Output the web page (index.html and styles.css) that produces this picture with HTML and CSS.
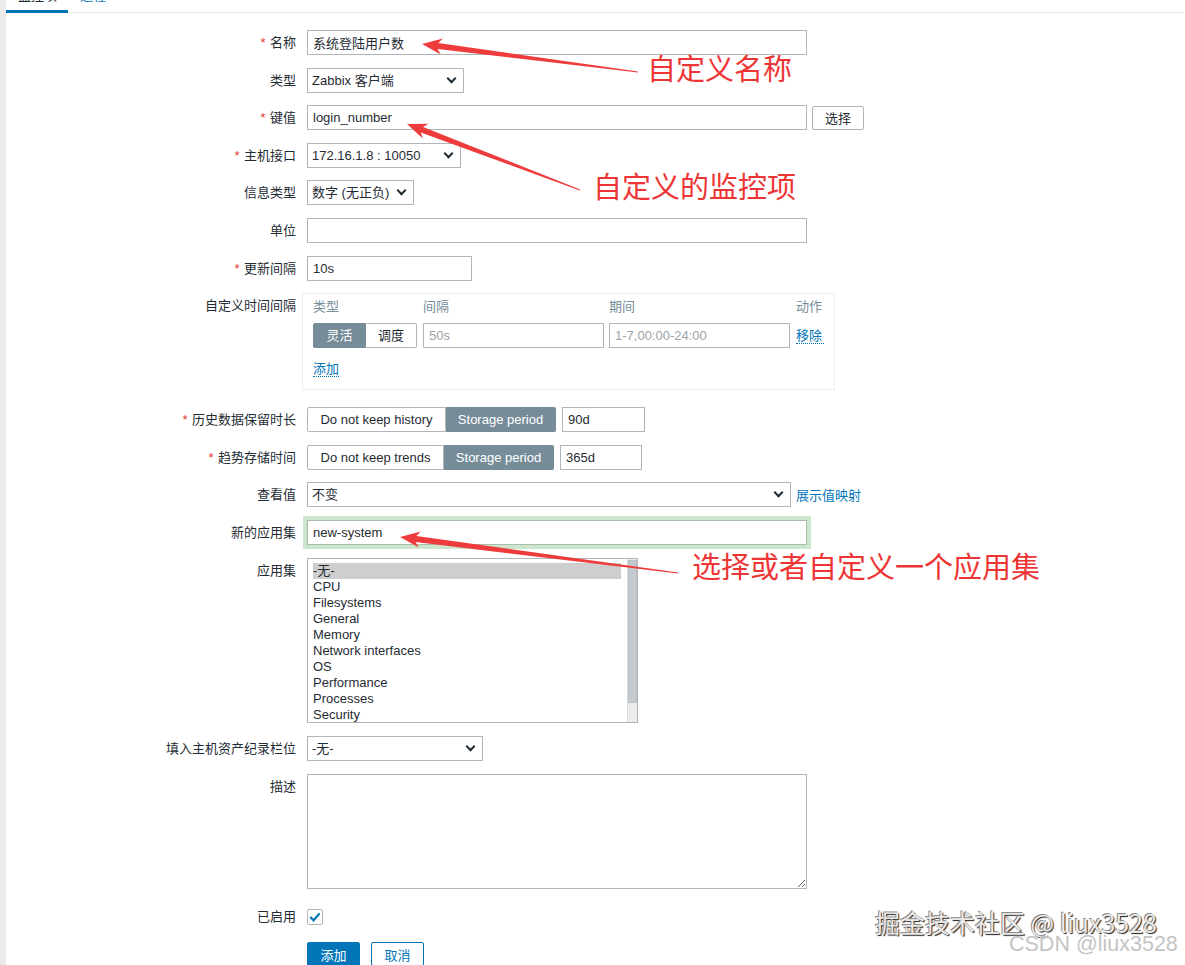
FILE: index.html
```html
<!DOCTYPE html>
<html lang="zh">
<head>
    <meta charset="UTF-8">
    <title>监控项</title>
    <link rel="stylesheet" href="styles.css">
</head>
<body>
<div class="page">

    <div class="tabs">
        <a class="tab active"><span>监控项</span></a>
        <a class="tab"><span>进程</span></a>
    </div>

    <form class="form">
        <div class="row">
            <label class="lbl req">名称</label>
            <div class="ctl"><input class="txt w500" value="系统登陆用户数"></div>
        </div>
        <div class="row">
            <label class="lbl">类型</label>
            <div class="ctl"><span class="sel"><select class="w157"><option>Zabbix 客户端</option></select></span></div>
        </div>
        <div class="row">
            <label class="lbl req">键值</label>
            <div class="ctl">
                <input class="txt w500" value="login_number">
                <button type="button" class="btn-grey">选择</button>
            </div>
        </div>
        <div class="row">
            <label class="lbl req">主机接口</label>
            <div class="ctl"><span class="sel"><select class="w154"><option>172.16.1.8 : 10050</option></select></span></div>
        </div>
        <div class="row">
            <label class="lbl">信息类型</label>
            <div class="ctl"><span class="sel"><select class="w107"><option>数字 (无正负)</option></select></span></div>
        </div>
        <div class="row">
            <label class="lbl">单位</label>
            <div class="ctl"><input class="txt w500" value=""></div>
        </div>
        <div class="row">
            <label class="lbl req">更新间隔</label>
            <div class="ctl"><input class="txt w165" value="10s"></div>
        </div>
        <div class="row row-iv">
            <label class="lbl">自定义时间间隔</label>
            <div class="intervals">
                <div class="iv-grid">
                    <div class="iv-h">类型</div>
                    <div class="iv-h">间隔</div>
                    <div class="iv-h">期间</div>
                    <div class="iv-h">动作</div>

                    <div class="seg">
                        <span class="seg-item on w53">灵活</span>
                        <span class="seg-item w51">调度</span>
                    </div>
                    <input class="txt w181" placeholder="50s">
                    <input class="txt w181" placeholder="1-7,00:00-24:00">
                    <a class="lnk">移除</a>
                </div>
                <a class="lnk">添加</a>
            </div>
        </div>
        <div class="row">
            <label class="lbl req">历史数据保留时长</label>
            <div class="ctl gap6">
                <div class="seg">
                    <span class="seg-item w139">Do not keep history</span>
                    <span class="seg-item on w110">Storage period</span>
                </div>
                <input class="txt w83" value="90d">
            </div>
        </div>
        <div class="row">
            <label class="lbl req">趋势存储时间</label>
            <div class="ctl gap6">
                <div class="seg">
                    <span class="seg-item w137">Do not keep trends</span>
                    <span class="seg-item on w110">Storage period</span>
                </div>
                <input class="txt w82" value="365d">
            </div>
        </div>
        <div class="row">
            <label class="lbl">查看值</label>
            <div class="ctl">
                <span class="sel"><select class="w484"><option>不变</option></select></span>
                <a class="lnk-plain">展示值映射</a>
            </div>
        </div>
        <div class="row">
            <label class="lbl">新的应用集</label>
            <div class="ctl"><input class="txt w500 focused" value="new-system"></div>
        </div>
        <div class="row row-list">
            <label class="lbl">应用集</label>
            <div class="listbox">
                <div class="opts">
                    <div class="opt picked">-无-</div>
                    <div class="opt">CPU</div>
                    <div class="opt">Filesystems</div>
                    <div class="opt">General</div>
                    <div class="opt">Memory</div>
                    <div class="opt">Network interfaces</div>
                    <div class="opt">OS</div>
                    <div class="opt">Performance</div>
                    <div class="opt">Processes</div>
                    <div class="opt">Security</div>
                </div>
                <div class="sbar"><div class="thumb"></div></div>
            </div>
        </div>
        <div class="row">
            <label class="lbl">填入主机资产纪录栏位</label>
            <div class="ctl"><span class="sel"><select class="w176"><option>-无-</option></select></span></div>
        </div>
        <div class="row">
            <label class="lbl">描述</label>
            <div class="ctl"><textarea class="area"></textarea></div>
        </div>
        <div class="row row-chk">
            <label class="lbl">已启用</label>
            <div class="ctl">
                <span class="chk">
                    <svg width="14" height="14" viewBox="0 0 14 14"><path d="M2.3 7 L5.6 10.3 L11.6 3.4" fill="none" stroke="#0275b8" stroke-width="2.2"/></svg>
                </span>
            </div>
        </div>
        <div class="row">
            <div></div>
            <div class="ctl gap11">
                <button type="button" class="btn-main">添加</button>
                <button type="button" class="btn-alt">取消</button>
            </div>
        </div>
    </form>

    <!-- annotations drawn over the screenshot -->
    <svg class="marks" width="1185" height="965" viewBox="0 0 1185 965">
        <polygon fill="#ee3b3b" points="422,44 440.8,54.5 437.5,49 637.9,72.6 638.1,71.4 438.3,43.1 442.9,38.6"/>
        <polygon fill="#ee3b3b" points="407,124 422.8,138.6 420.8,132.5 579.8,190.6 580.2,189.4 423,126.9 428.5,123.7"/>
        <polygon fill="#ee3b3b" points="400,537 418.8,547.5 415.5,542 677.9,573.6 678.1,572.4 416.3,536.1 420.9,531.6"/>
    </svg>
    <span class="note note1">自定义名称</span>
    <span class="note note2">自定义的监控项</span>
    <span class="note note3">选择或者自定义一个应用集</span>

    <span class="wm wm1">掘金技术社区 @ liux3528</span>
    <span class="wm wm2">CSDN @liux3528</span>
</div>
</body>
</html>
```

FILE: styles.css
```css
body {
    margin: 0;
    font-family: "Liberation Sans", "Noto Sans CJK SC", sans-serif;
    font-size: 13px;
    color: #1f2c33;
    background: #fff;
}
.page {
    position: relative;
    min-height: 965px;
    border-left: 6px solid #ececec;
    overflow: hidden;
}

/* tabs, mostly scrolled off the top */
.tabs {
    display: flex;
    height: 12px;
    border-bottom: 1px solid #e6e9eb;
    margin-right: 2px;
}
.tab {
    box-sizing: border-box;
    height: 13px;
    padding: 0 11px 0 12px;
    border-bottom: 3px solid transparent;
    overflow: hidden;
    color: #0275b8;
    line-height: 13px;
}
.tab span {
    display: block;
    margin-top: -11px;
}
.tab.active {
    border-bottom-color: #0275b8;
    color: #1f2c33;
}

/* form grid */
.form {
    display: flex;
    flex-direction: column;
    gap: 12.6px;
    padding-top: 17px;
}
.row {
    display: grid;
    grid-template-columns: 290px 1fr;
    column-gap: 11px;
    align-items: start;
}
.lbl {
    text-align: right;
    line-height: 25px;
    white-space: nowrap;
}
.req::before {
    content: '*';
    color: #e33734;
    margin-right: .35em;
}
.ctl {
    display: flex;
    align-items: center;
    gap: 5px;
    min-height: 25px;
}
.gap6 { gap: 6px; }
.gap11 { gap: 11px; }
.row-iv { margin-bottom: 4.4px; }
.row-list { margin-bottom: 1px; }
.row-chk { margin-top: 3px; }

.txt, select, .area {
    box-sizing: border-box;
    height: 25px;
    border: 1px solid #b3b6b8;
    border-radius: 0;
    background: #fff;
    font: inherit;
    color: #1f2c33;
    margin: 0;
}
.txt {
    padding: 0 5px;
}
.txt::placeholder {
    color: #9aa3a8;
}
.focused {
    border-color: #a9bea9;
    box-shadow: 0 0 0 4px #cde5cd;
}

.w500 { width: 500px; }
.w484 { width: 484px; }
.w181 { width: 181px; }
.w176 { width: 176px; }
.w165 { width: 165px; }
.w157 { width: 157px; }
.w154 { width: 154px; }
.w107 { width: 107px; }
.w83 { width: 83px; }
.w82 { width: 82px; }

/* selects */
.sel {
    position: relative;
    display: block;
    height: 25px;
}
select {
    display: block;
    height: 25px;
    appearance: none;
    -webkit-appearance: none;
    padding: 0 22px 0 4px;
}
.sel::after {
    content: '';
    position: absolute;
    right: 9px;
    top: 7px;
    width: 5px;
    height: 5px;
    border-right: 2px solid #1f2c33;
    border-bottom: 2px solid #1f2c33;
    transform: rotate(45deg);
    pointer-events: none;
}

/* buttons */
.btn-grey, .btn-main, .btn-alt {
    box-sizing: border-box;
    height: 24px;
    width: 53px;
    padding: 0;
    border-radius: 2px;
    font: inherit;
    cursor: pointer;
}
.btn-grey {
    width: 52px;
    background: #fff;
    border: 1px solid #b3b6b8;
    color: #1f2c33;
}
.btn-main {
    background: #0275b8;
    border: 1px solid #0275b8;
    color: #fff;
}
.btn-alt {
    background: #fff;
    border: 1px solid #0275b8;
    color: #0275b8;
}

/* links */
.lnk {
    color: #0275b8;
    border-bottom: 1px dotted #0275b8;
    line-height: 15px;
    cursor: pointer;
}
.lnk-plain {
    color: #0275b8;
    cursor: pointer;
}

/* segmented radio */
.seg {
    display: flex;
}
.seg-item {
    box-sizing: border-box;
    height: 25px;
    line-height: 23px;
    text-align: center;
    border: 1px solid #b3b6b8;
    background: #fff;
    white-space: nowrap;
}
.seg-item:first-child {
    border-radius: 2px 0 0 2px;
}
.seg-item:last-child {
    border-radius: 0 2px 2px 0;
}
.seg-item + .seg-item {
    border-left: 0;
}
.seg-item.on {
    background: #768d99;
    border-color: #768d99;
    color: #fff;
}
.w53 { width: 53px; }
.w51 { width: 51px; }
.w139 { width: 139px; }
.w137 { width: 137px; }
.w110 { width: 110px; }

/* custom intervals table */
.intervals {
    box-sizing: border-box;
    width: 533px;
    height: 97px;
    margin-left: -5px;
    padding: 5px 10px 0;
    border: 1px solid #ebeef0;
}
.iv-grid {
    display: grid;
    grid-template-columns: 110px 186px 187px auto;
    row-gap: 8px;
    align-items: center;
    margin-bottom: 13px;
}
.iv-h {
    color: #768d99;
    line-height: 16px;
}
.intervals > .lnk {
    display: inline-block;
}

/* list box */
.listbox {
    box-sizing: border-box;
    display: flex;
    width: 331px;
    height: 165px;
    border: 1px solid #b3b6b8;
    background: #fff;
}
.opts {
    flex: 1;
    overflow: hidden;
    padding: 4px 6px 0 5px;
}
.opt {
    line-height: 16px;
    height: 16px;
    white-space: nowrap;
}
.opt.picked {
    background: #cecece;
}
.sbar {
    width: 9px;
    background: #ececec;
    border-left: 1px solid #dcdcdc;
    padding-top: 1px;
}
.thumb {
    height: 143px;
    background: #c4cacd;
    border: 1px solid #b9bfc2;
    box-sizing: border-box;
}

/* textarea, checkbox */
.area {
    display: block;
    width: 500px;
    height: 115px;
    padding: 4px 5px;
    resize: both;
}
.chk {
    box-sizing: border-box;
    display: flex;
    align-items: center;
    justify-content: center;
    width: 16px;
    height: 16px;
    border: 1px solid #b3b6b8;
    border-radius: 2px;
    background: #fff;
}

/* annotations */
.marks {
    position: absolute;
    left: -6px;
    top: 0;
    pointer-events: none;
}
.note {
    position: absolute;
    color: #ee3535;
    font-family: "Noto Sans CJK SC", sans-serif;
    font-size: 29px;
    line-height: 29px;
    white-space: nowrap;
}
.note1 { left: 641px; top: 53px; }
.note2 { left: 587px; top: 171px; }
.note3 { left: 686px; top: 551px; }

.wm {
    position: absolute;
    white-space: nowrap;
    font-family: "Noto Sans CJK SC", sans-serif;
}
.wm1 {
    left: 869px;
    top: 906px;
    font-size: 25px;
    line-height: 32px;
    color: #e9e9e9;
    text-shadow: -1px -1px 0 #8a8a8a, 1px 1px 1px #1e1e1e;
}
.wm2 {
    left: 1003px;
    top: 931px;
    font-family: "Liberation Sans", sans-serif;
    font-size: 21.5px;
    line-height: 26px;
    color: #c4c4c4;
    text-shadow: 0 0 1px #fff;
}
```
